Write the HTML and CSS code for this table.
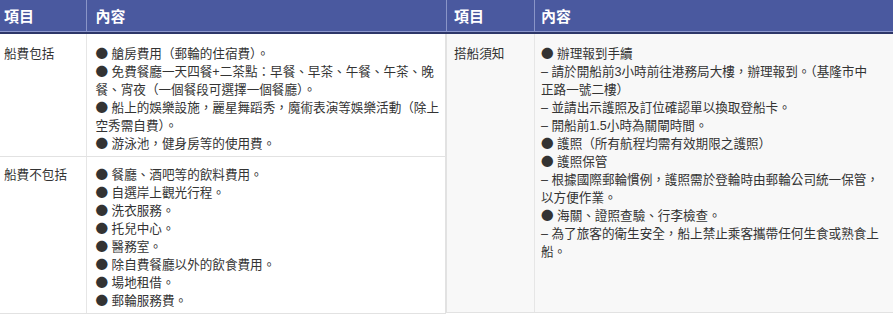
FILE: index.html
```html
<!DOCTYPE html>
<html lang="zh-Hant">
<head>
<meta charset="utf-8">
<title>郵輪須知</title>
<link rel="stylesheet" href="styles.css">
</head>
<body>
<div class="wrap">
  <table class="tbl tbl-left">
    <thead>
      <tr><th class="c1">項目</th><th class="c2">內容</th></tr>
    </thead>
    <tbody>
      <tr class="r1">
        <td class="c1">船費包括</td>
        <td class="c2">
          <span class="b">●</span> 艙房費用（郵輪的住宿費）。<br>
          <span class="b">●</span> 免費餐廳一天四餐+二茶點：早餐、早茶、午餐、午茶、晚餐、宵夜（一個餐段可選擇一個餐廳）。<br>
          <span class="b">●</span> 船上的娛樂設施，麗星舞蹈秀，魔術表演等娛樂活動（除上空秀需自費）。<br>
          <span class="b">●</span> 游泳池，健身房等的使用費。
        </td>
      </tr>
      <tr class="r2">
        <td class="c1">船費不包括</td>
        <td class="c2">
          <span class="b">●</span> 餐廳、酒吧等的飲料費用。<br>
          <span class="b">●</span> 自選岸上觀光行程。<br>
          <span class="b">●</span> 洗衣服務。<br>
          <span class="b">●</span> 托兒中心。<br>
          <span class="b">●</span> 醫務室。<br>
          <span class="b">●</span> 除自費餐廳以外的飲食費用。<br>
          <span class="b">●</span> 場地租借。<br>
          <span class="b">●</span> 郵輪服務費。
        </td>
      </tr>
    </tbody>
  </table>
  <table class="tbl tbl-right">
    <thead>
      <tr><th class="c1">項目</th><th class="c2">內容</th></tr>
    </thead>
    <tbody>
      <tr class="r1">
        <td class="c1">搭船須知</td>
        <td class="c2">
          <span class="b">●</span> 辦理報到手續<br>
          <span class="d">–</span> 請於開船前3小時前往港務局大樓，辦理報到。（基隆市中<br>正路一號二樓）<br>
          <span class="d">–</span> 並請出示護照及訂位確認單以換取登船卡。<br>
          <span class="d">–</span> 開船前1.5小時為關閘時間。<br>
          <span class="b">●</span> 護照（所有航程均需有效期限之護照）<br>
          <span class="b">●</span> 護照保管<br>
          <span class="d">–</span> 根據國際郵輪慣例，護照需於登輪時由郵輪公司統一保管，以方便作業。<br>
          <span class="b">●</span> 海關、證照查驗、行李檢查。<br>
          <span class="d">–</span> 為了旅客的衛生安全，船上禁止乘客攜帶任何生食或熟食上船。
        </td>
      </tr>
    </tbody>
  </table>
</div>
</body>
</html>
```

FILE: styles.css
```css
html, body {
  margin: 0;
  padding: 0;
  background: #ffffff;
}
body {
  font-family: "Liberation Sans", "Noto Sans CJK TC", sans-serif;
  font-size: 12.6px;
  line-height: 18px;
  color: #333333;
}
.wrap {
  display: flex;
  align-items: flex-start;
  width: 893px;
  height: 315px;
  overflow: hidden;
}
.tbl {
  border-collapse: collapse;
  table-layout: fixed;
  height: 313px;
}
.tbl-left { width: 446px; }
.tbl-right { width: 447px; }
.tbl th {
  background: #4a599f;
  color: #ffffff;
  font-family: "Noto Sans CJK TC", sans-serif;
  font-weight: bold;
  font-size: 15px;
  line-height: 18px;
  text-align: left;
  height: 32px;
  padding: 0;
  border-bottom: 2px solid #2d3668;
  box-shadow: inset 0 -1px 0 #8c97cc;
  vertical-align: middle;
}
.tbl-left th.c1 { width: 86px; padding-left: 4px; box-sizing: border-box; }
.tbl-left th.c2 { padding-left: 9px; border-left: 1px solid #8a95c8; }
.tbl-right th.c1 { width: 88px; padding-left: 7px; box-sizing: border-box; border-left: 1px solid #8a95c8; }
.tbl-right th.c2 { padding-left: 6px; border-left: 1px solid #8a95c8; }
.tbl td {
  vertical-align: top;
  border-bottom: 1px solid #e2e2e2;
}
.tbl-left td { background: #ffffff; }
.tbl-right td { background: #f8f8f8; }
.tbl-left td.c1 { padding: 0 0 0 4px; }
.tbl-left td.c2 { padding: 0 3px 0 9px; border-left: 1px solid #e6e6e6; border-right: 1px solid #e2e2e2; }
.tbl-left tr.r1 td { padding-top: 11px; padding-bottom: 3px; height: 108px; }
.tbl-left tr.r2 td { padding-top: 9px; padding-bottom: 3px; }
.tbl-right td.c1 { padding: 11px 0 0 7px; border-left: 1px solid #e2e2e2; }
.tbl-right td.c2 { padding: 11px 8px 0 6px; border-left: 1px solid #e6e6e6; }
.b {
  font-family: "Noto Sans CJK TC", sans-serif;
  line-height: 0;
}
.d {
  font-family: "Liberation Sans", sans-serif;
  line-height: 0;
}
```
